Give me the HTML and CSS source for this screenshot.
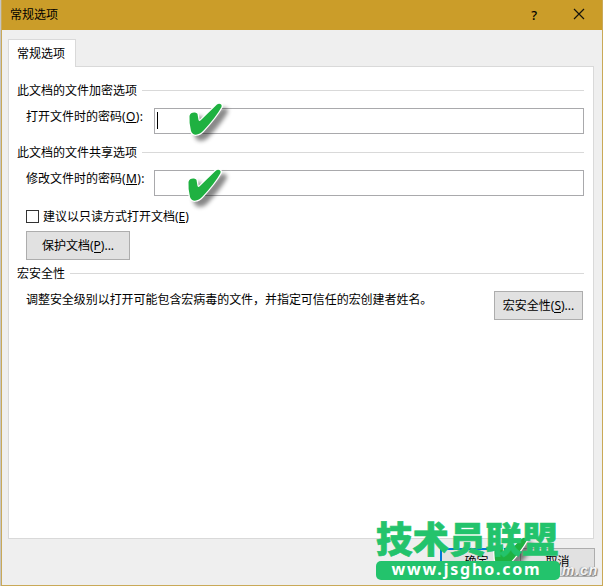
FILE: index.html
```html
<!DOCTYPE html>
<html lang="zh-CN">
<head>
<meta charset="utf-8">
<title>常规选项</title>
<link rel="stylesheet" href="styles.css">
</head>
<body>
<main class="dialog">
  <header class="titlebar">
    <span class="title">常规选项</span>
    <span class="help">?</span>
    <svg class="close" width="12" height="12" viewBox="0 0 12 12"><path d="M1 1 11 11M11 1 1 11" fill="none" stroke="#17140c" stroke-width="1.2"/></svg>
  </header>
  <nav class="tabs"><div class="tab">常规选项</div></nav>
  <section class="panel">
    <h2 class="group">此文档的文件加密选项</h2>
    <div class="field">
      <label>打开文件时的密码<span class="key">(<u>O</u>):</span></label>
      <div class="input"><span class="caret"></span>
        <svg class="check check-open" width="48" height="46" viewBox="0 0 48 46"><path class="mark" d="M6.5 14C7 10 13 9.5 14.5 12L15.5 18Q16.5 20 18.5 17.5L34 2.5C36 1 39.5 2 38.5 5Q33 15 21 28C16 34 9.5 34 8 29Q6 21 6.5 14Z"/></svg>
      </div>
    </div>
    <h2 class="group second">此文档的文件共享选项</h2>
    <div class="field">
      <label>修改文件时的密码<span class="key">(<u>M</u>):</span></label>
      <div class="input">
        <svg class="check check-edit" width="48" height="46" viewBox="0 0 48 46"><path class="mark" d="M6.5 14C7 10 13 9.5 14.5 12L15.5 18Q16.5 20 18.5 17.5L34 2.5C36 1 39.5 2 38.5 5Q33 15 21 28C16 34 9.5 34 8 29Q6 21 6.5 14Z"/></svg>
      </div>
    </div>
    <div class="readonly"><span class="box"></span><span>建议以只读方式打开文档(<u>E</u>)</span></div>
    <div class="button protect">保护文档(<u>P</u>)...</div>
    <h2 class="group macro">宏安全性</h2>
    <div class="macro-row">
      <p>调整安全级别以打开可能包含宏病毒的文件，并指定可信任的宏创建者姓名。</p>
      <div class="button security">宏安全性(<u>S</u>)...</div>
    </div>
  </section>
  <footer class="actions">
    <div class="button ok">确定</div>
    <div class="button cancel">取消</div>
  </footer>
  <div class="watermark">
    <svg class="check check-ok" width="48" height="46" viewBox="0 0 48 46"><path class="mark" d="M6.5 14C7 10 13 9.5 14.5 12L15.5 18Q16.5 20 18.5 17.5L34 2.5C36 1 39.5 2 38.5 5Q33 15 21 28C16 34 9.5 34 8 29Q6 21 6.5 14Z"/></svg>
    <span class="domain">m.cn</span>
    <div class="brand">技术员联盟</div>
    <div class="site">www.jsgho.com</div>
  </div>
</main>
</body>
</html>
```
FILE: styles.css
```css
* { box-sizing: border-box; }
body {
  margin: 0;
  background: #c5c5c5;
  font: 12px/18px "Noto Sans", "Noto Sans CJK SC", sans-serif;
  color: #000;
}
u { text-decoration: none; box-shadow: inset 0 -1px #000; display: inline-block; height: 15px; line-height: 18px; vertical-align: top; }
.dialog {
  position: relative;
  height: 586px;
  margin-left: 1px;
  overflow: hidden;
  background: #efefef;
  border: 1px solid #c9a957;
  border-top: 0;
}
.titlebar {
  display: flex;
  align-items: center;
  height: 30px;
  margin: 0 -1px;
  padding: 0 18px 1px 9px;
  background: #cb9d29;
}
.title { flex: 1; }
.help { margin-right: 36px; font-size: 13px; font-weight: 500; }
.close { margin-bottom: 2px; }
.tabs { height: 36px; padding: 9px 0 0 6px; }
.tab {
  position: relative;
  z-index: 1;
  width: 68px;
  height: 28px;
  padding: 5px 8px 0;
  background: #fff;
  border: 1px solid #d9d9d9;
  border-bottom: 0;
}
.panel {
  height: 473px;
  margin: 0 8px 0 6px;
  padding: 15px 9px 0 8px;
  background: #fff;
  border: 1px solid #d9d9d9;
}
.group {
  display: flex;
  align-items: center;
  gap: 5px;
  height: 18px;
  margin: 0;
  font-size: 12px;
  font-weight: 400;
}
.group::after { content: ""; flex: 1; height: 1px; margin-bottom: 1px; background: #d9d9d9; }
.second { margin-top: 10px; }
.field { display: flex; margin-top: 8px; padding-left: 9px; height: 26px; }
.field label { width: 128px; white-space: nowrap; }
.key { letter-spacing: .35px; }
.input { position: relative; flex: 1; height: 26px; border: 1px solid #a9a9ac; background: #fff; }
.caret { display: block; width: 1px; height: 17px; margin: 3px 0 0 2px; background: #000; }
.check { position: absolute; overflow: visible; filter: drop-shadow(5px 5px 2px #0007); }
.mark { fill: #1fb141; stroke: #fff; stroke-width: 2.5; paint-order: stroke; }
.check-open { left: 28px; top: -7px; }
.check-edit { left: 27px; top: -3px; }
.readonly { display: flex; gap: 4px; align-items: center; margin: 12px 0 0 9px; height: 18px; }
.box { width: 13px; height: 13px; margin-bottom: 1px; border: 1px solid #333; background: #fff; }
.button { height: 29px; border: 1px solid #adadad; background: #e1e1e1; text-align: center; line-height: 27px; white-space: nowrap; }
.button u { height: 21px; line-height: 27px; }
.protect { width: 104px; margin: 5px 0 0 9px; }
.macro { margin-top: 5px; }
.macro-row { display: flex; justify-content: space-between; margin: 8px 1px 0 9px; }
.macro-row p { margin: 0; white-space: nowrap; letter-spacing: -.05px; }
.security { width: 89px; }
.actions { display: flex; justify-content: flex-end; gap: 7px; padding: 9px 7px 0 0; }
.ok { width: 73px; border: 2px solid #0078d7; line-height: 24px; }
.cancel { width: 75px; line-height: 26px; }
.watermark { position: absolute; left: 374px; top: 518px; width: 222px; height: 66px; }
.brand {
  position: relative;
  height: 43px;
  color: #23c36c;
  font: 900 36.5px/40px "Noto Sans CJK SC", sans-serif;
  white-space: nowrap;
  -webkit-text-stroke: .6px #23c36c;
}
.site {
  position: relative;
  width: 184px;
  height: 19px;
  border-radius: 5px;
  background: #23c36c;
  color: #fff;
  font: 700 16px/17px "Noto Sans", sans-serif;
  letter-spacing: 1.8px;
  padding-right: 3px;
  text-align: center;
}
.check-ok { left: 112px; top: 18px; }
.domain {
  position: absolute;
  right: 0;
  top: 43px;
  color: #f3f3f3;
  font: italic bold 14px/18px "Liberation Sans", sans-serif;
  letter-spacing: .8px;
  text-shadow: 1px 1px 1px #777, -1px 0 1px #999;
}
```
